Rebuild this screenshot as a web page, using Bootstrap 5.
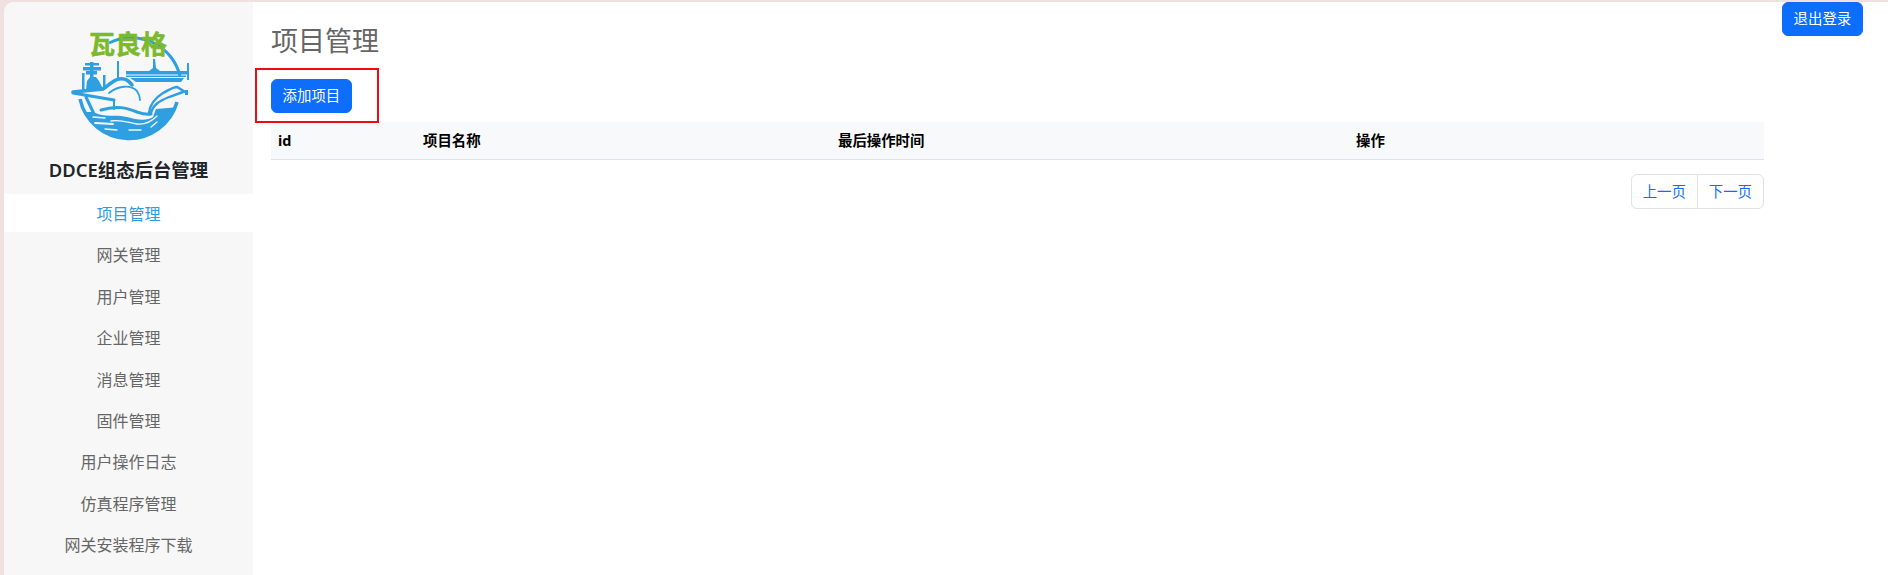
<!DOCTYPE html>
<html lang="zh-CN">
<head>
    <meta charset="UTF-8">
    <meta name="viewport" content="width=device-width, initial-scale=1.0">
    <title>项目管理</title>
    <link href="https://cdn.jsdelivr.net/npm/bootstrap@5.3.0/dist/css/bootstrap.min.css" rel="stylesheet">
    <style>
        html, body {
            height: 100%;
        }

        body {
            font-family: "Noto Sans", "Noto Sans CJK SC", sans-serif;
            background: #f0e0df;
            padding: 2px 0 0 4px;
            overflow: hidden;
        }

        .page-wrap {
            height: 100%;
            background: #fff;
            border-top-left-radius: 10px;
        }

        .side-panel {
            width: 249px;
            flex: none;
            background: #f7f7f7;
            border-top-left-radius: 10px;
        }

        .side-head {
            height: 192px;
            padding-top: 22px;
        }

        .side-logo {
            display: block;
            width: 130px;
            height: 121px;
            margin: 0 auto;
        }

        .logo-word {
            font-family: "Noto Sans CJK SC", sans-serif;
            font-size: 26px;
            font-weight: 700;
            fill: #7cb92c;
            stroke: #7cb92c;
            stroke-width: .5px;
        }

        .side-title {
            font-size: 18.4px;
            font-weight: 600;
            line-height: 27px;
            margin: 11px 0 0;
            color: #212529;
        }

        .side-link {
            font-size: 16px;
            line-height: 24px;
            padding: 8px 0 6px;
            margin-bottom: 3.4px;
            color: #666;
        }

        .side-link.active {
            background: #fff;
            color: #2d9ae2;
        }

        .main-body {
            width: 1493px;
            flex: none;
            margin-left: 18px;
            padding-top: 22px;
        }

        .main-title {
            font-size: 27px;
            line-height: 34px;
            font-weight: 400;
            color: #666;
            margin: 0 0 21px;
        }

        .act-btn {
            font-size: 14.4px;
            line-height: 20px;
            padding: 6px 10.6px;
            white-space: nowrap;
        }

        .btn-slot {
            margin-bottom: 9px;
        }

        .red-note {
            position: absolute;
            top: -11px;
            left: -16px;
            right: -27px;
            bottom: -10px;
            border: 2px solid #f00c0c;
            pointer-events: none;
        }

        .data-grid {
            table-layout: fixed;
            font-size: 14.4px;
            margin-bottom: 14px;
        }

        .data-grid th {
            background: #f8f9fa;
            color: #000;
            font-weight: 700;
            line-height: 21px;
            padding: 8px 7px;
        }

        .col-id { width: 145px; }
        .col-name { width: 415px; }
        .col-time { width: 518px; }

        .pager .page-link {
            font-size: 14.4px;
            line-height: 21px;
            padding: 6px 11px;
        }

        .logout-slot {
            margin-left: 18px;
        }
    </style>
</head>
<body>
    <div class="page-wrap d-flex">
        <!-- Sidebar -->
        <div class="side-panel">
            <div class="side-head text-center">
                <svg class="side-logo" viewBox="63 24 130 121" aria-label="logo">
                    <defs>
                        <clipPath id="logoCircle"><circle cx="128" cy="88" r="50.500"/></clipPath>
                    </defs>
                    <!-- top arc and lower ring -->
                    <path d="M108 43 A50 50 0 0 1 179 76" fill="none" stroke="#2e9fe0" stroke-width="3"/>
                    <path d="M176 102 A50 50 0 0 1 79 99" fill="none" stroke="#2e9fe0" stroke-width="3.500"/>
                    <!-- water -->
                    <g clip-path="url(#logoCircle)">
                        <path d="M76 112 L92 112 C104 118 114 114 126 117 C136 120 146 121 152 117 L155 109 L180 107 L180 145 L76 145 Z" fill="#2e9fe0"/>
                        <g fill="none" stroke="#f7f7f7" stroke-linecap="round">
                            <path d="M92 117 L104 118" stroke-width="1.500"/>
                            <path d="M94 123 L112 124" stroke-width="1.800"/>
                            <path d="M110 121 C120 119 128 123 136 124 C144 125 150 122 156 116" stroke-width="1.300"/>
                            <path d="M104 129 L116 130" stroke-width="1.300"/>
                            <path d="M128 130 L140 130" stroke-width="1.300"/>
                            <path d="M150 127 L156 122" stroke-width="1.300"/>
                        </g>
                    </g>
                    <g fill="none" stroke="#2e9fe0" stroke-linecap="round">
                        <!-- wave lines above the water -->
                        <path d="M100 110 C116 105 126 108 136 112 C142 114 146 115 150 114" stroke-width="3"/>
                        <!-- hull -->
                        <path d="M72 93 L113 100" stroke-width="3"/>
                        <path d="M85 97 L93 114" stroke-width="3"/>
                        <path d="M113 100 L113 109" stroke-width="2"/>
                        <path d="M72 92 L102 89 C108 85 112 80 118 79 C125 78 128 81 131 85" stroke-width="3.500"/>
                        <path d="M108 93 C118 85 130 85 136 91 C138 94 139 97 139 100" stroke-width="1.800"/>
                        <!-- bow -->
                        <path d="M148 113 C149 104 154 98 162 93 C168 90 172 87 176 87 L186 93" stroke-width="2.400"/>
                        <path d="M150 113 C152 105 158 101 168 97 L182 92" stroke-width="2.400"/>
                    </g>
                    <g fill="#2e9fe0">
                        <!-- island -->
                        <rect x="89" y="62" width="3.500" height="16"/>
                        <rect x="84" y="63" width="14" height="2.500"/>
                        <rect x="82" y="67" width="18" height="3.500"/>
                        <rect x="85" y="71" width="11" height="3.500"/>
                        <rect x="81" y="73" width="2.500" height="18"/>
                        <path d="M85 90 L86 81 L89 77 L95 77 L98 81 L102 89 Z"/>
                        <rect x="102" y="75" width="2.500" height="13"/>
                        <rect x="116" y="61" width="2" height="17"/>
                        <!-- flight deck -->
                        <rect x="125" y="71" width="62" height="3.500"/>
                        <rect x="125" y="75.500" width="60" height="1.500"/>
                        <path d="M129 78 L183 78 L180 82 L135 82 Z"/>
                        <path d="M152 59 L154 59 L155 68 L159 71 L148 71 L152 68 Z"/>
                        <rect x="186" y="63" width="2" height="17"/>
                        <rect x="184" y="90" width="3" height="5"/>
                    </g>
                    <text class="logo-word" x="127" y="54" text-anchor="middle">瓦良格</text>
                </svg>
                <h1 class="side-title">DDCE组态后台管理</h1>
            </div>
            <nav class="nav flex-column text-center">
                <a class="nav-link side-link active" href="#">项目管理</a>
                <a class="nav-link side-link" href="#">网关管理</a>
                <a class="nav-link side-link" href="#">用户管理</a>
                <a class="nav-link side-link" href="#">企业管理</a>
                <a class="nav-link side-link" href="#">消息管理</a>
                <a class="nav-link side-link" href="#">固件管理</a>
                <a class="nav-link side-link" href="#">用户操作日志</a>
                <a class="nav-link side-link" href="#">仿真程序管理</a>
                <a class="nav-link side-link" href="#">网关安装程序下载</a>
            </nav>
        </div>

        <!-- Main content -->
        <div class="main-body">
            <h2 class="main-title">项目管理</h2>
            <div class="btn-slot position-relative d-inline-block">
                <button type="button" class="btn btn-primary act-btn d-block">添加项目</button>
                <div class="red-note"></div>
            </div>
            <table class="table data-grid">
                <colgroup>
                    <col class="col-id">
                    <col class="col-name">
                    <col class="col-time">
                    <col>
                </colgroup>
                <thead>
                    <tr>
                        <th>id</th>
                        <th>项目名称</th>
                        <th>最后操作时间</th>
                        <th>操作</th>
                    </tr>
                </thead>
            </table>
            <ul class="pagination pager justify-content-end">
                <li class="page-item"><a class="page-link" href="#">上一页</a></li>
                <li class="page-item"><a class="page-link" href="#">下一页</a></li>
            </ul>
        </div>

        <div class="logout-slot">
            <button type="button" class="btn btn-primary act-btn">退出登录</button>
        </div>
    </div>

    <script src="https://cdn.jsdelivr.net/npm/bootstrap@5.3.0/dist/js/bootstrap.bundle.min.js"></script>
</body>
</html>
